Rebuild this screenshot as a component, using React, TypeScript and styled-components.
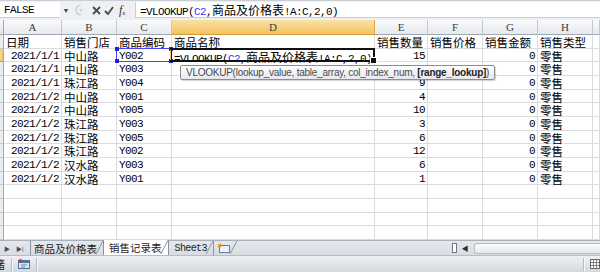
import React from 'react';
import styled, { createGlobalStyle } from 'styled-components';

const Global = createGlobalStyle`
  * { box-sizing: border-box; }
  html, body { margin: 0; padding: 0; background: #fff; }
  body {
    width: 600px;
    height: 272px;
    overflow: hidden;
    font-family: "Liberation Sans", "Noto Sans CJK SC", sans-serif;
  }
`;

const COLS = '4px 58px 55px 55px 203px 53px 55px 55px 55px 1fr';

const Page = styled.div`
  width: 600px;
  height: 272px;
  display: flex;
  flex-direction: column;
  background: #fff;
`;

/* ---------- formula bar ---------- */

const FormulaBar = styled.div`
  height: 20px;
  display: flex;
  align-items: stretch;
  padding: 1px 0 2px;
  background: #eef0f3;
  border-top: 1px solid #c9ced6;
  & > * { flex-shrink: 0; }
`;

const NameBox = styled.div`
  width: 60px;
  background: #fff;
  border-bottom: 1px solid #c9ced6;
  display: flex;
  align-items: center;
  padding-left: 4px;
`;

const DropArrow = styled.div`
  width: 12px;
  display: flex;
  align-items: center;
  justify-content: center;
  color: #444;
  font-size: 7px;
`;

const Grip = styled.div`
  width: 14px;
  display: flex;
  align-items: center;
  justify-content: center;
`;

const BarIcons = styled.div`
  width: 49px;
  display: flex;
  align-items: center;
  gap: 3px;
  padding-left: 5px;
`;

const BarIcon = styled.span`
  width: 10px;
  display: flex;
  align-items: center;
  justify-content: center;
`;

const Fx = styled.span`
  font: italic 12px "Liberation Serif", serif;
  color: #333;
  padding-left: 2px;
  sub { font-size: 7px; vertical-align: -1px; }
`;

const FormulaInput = styled.div`
  flex: 1;
  background: #fff;
  border-left: 1px solid #c9ced6;
  border-bottom: 1px solid #c9ced6;
  display: flex;
  align-items: center;
  padding-left: 4px;
  white-space: nowrap;
`;

/* ---------- text helpers ---------- */

const Mono = styled.span`
  font-family: "Liberation Mono", monospace;
  font-size: 11px;
  letter-spacing: -0.6px;
  color: #000;
`;

const Han = styled.span<{ $size?: number }>`
  font-family: "Noto Sans CJK SC", sans-serif;
  font-size: ${p => p.$size ?? 11.5}px;
  letter-spacing: 0;
`;

const RefText = styled.span`
  color: #3a3aff;
`;

function txt(s: string, size?: number) {
  return s
    .split(/([\u3000-\u9fff\uff00-\uffef]+)/)
    .filter(Boolean)
    .map((part, i) =>
      /[\u3000-\u9fff\uff00-\uffef]/.test(part) ? (
        <Han key={i} $size={size}>{part}</Han>
      ) : (
        <span key={i}>{part}</span>
      )
    );
}

/* ---------- sheet ---------- */

const Sheet = styled.div`
  position: relative;
  height: 220px;
  overflow: hidden;
  display: grid;
  grid-template-columns: ${COLS};
  grid-template-rows: 15px repeat(15, 13.67px);
`;

const Corner = styled.div`
  background: linear-gradient(#f7f8fa, #e3e6ea);
  border-right: 1px solid #9ea7b3;
  border-bottom: 1px solid #9ea7b3;
`;

const ColHead = styled.div<{ $sel?: boolean }>`
  background: ${p =>
    p.$sel ? 'linear-gradient(#fbe1a6, #f2c35f)' : 'linear-gradient(#f9fafb, #e6e9ed)'};
  border-right: 1px solid ${p => (p.$sel ? '#e0a84a' : '#c3c8cf')};
  border-bottom: 1px solid ${p => (p.$sel ? '#d89a36' : '#9ea7b3')};
  display: flex;
  align-items: center;
  justify-content: center;
  font: 11px "Liberation Serif", serif;
  color: #3c3c3c;
`;

const RowHead = styled.div<{ $sel?: boolean }>`
  background: ${p => (p.$sel ? 'linear-gradient(90deg, #f9d890, #f2c35f)' : '#e9ecf0')};
  border-right: 1px solid #9ea7b3;
  border-bottom: 1px solid ${p => (p.$sel ? '#d89a36' : '#c3c8cf')};
`;

const Cell = styled.div<{ $right?: boolean }>`
  position: relative;
  border-right: 1px solid #dadcdd;
  border-bottom: 1px solid #dadcdd;
  padding: 1px 2px 0 2px;
  text-align: ${p => (p.$right ? 'right' : 'left')};
  white-space: nowrap;
  line-height: 13px;
  font-family: "Liberation Mono", monospace;
  font-size: 11px;
  letter-spacing: -0.6px;
  color: #000;
`;

const EditFrame = styled.div`
  position: absolute;
  inset: -1px -1px -1px -2px;
  border: 2px solid #111;
  z-index: 2;
  pointer-events: none;
  &::before {
    content: '';
    position: absolute;
    left: -2px;
    top: 0;
    bottom: 0;
    width: 1px;
    background: #f2c35f;
  }
  &::after {
    content: '';
    position: absolute;
    right: -4px;
    bottom: -4px;
    width: 5px;
    height: 5px;
    background: #111;
    border: 1px solid #fff;
  }
`;

const RefFrame = styled.div`
  position: absolute;
  inset: -1px -1px -1px -1px;
  border: 1px solid #4343ff;
  z-index: 2;
`;

const RefDot = styled.span<{ $top?: boolean; $left?: boolean }>`
  position: absolute;
  width: 4px;
  height: 4px;
  background: #2020d8;
  ${p => (p.$top ? 'top: -2px;' : 'bottom: -2px;')}
  ${p => (p.$left ? 'left: -2px;' : 'right: -2px;')}
`;

const Tooltip = styled.div`
  position: absolute;
  left: 180px;
  top: 45px;
  width: 315px;
  height: 15px;
  z-index: 3;
  border: 1px solid #8d8d8d;
  border-radius: 2px;
  background: linear-gradient(#ffffff, #e6e8ee);
  box-shadow: 1px 1px 1px rgba(0, 0, 0, 0.18);
  display: flex;
  align-items: center;
  padding-left: 5px;
  white-space: nowrap;
  font: 10px "Liberation Sans", sans-serif;
  letter-spacing: -0.25px;
  color: #4a4a4a;
  b { color: #222; font-weight: bold; }
`;

/* ---------- sheet tabs ---------- */

const TabBar = styled.div`
  height: 15px;
  display: flex;
  align-items: stretch;
  background: linear-gradient(#e4e7eb, #d9dde3);
  border-top: 1px solid #a9b1bc;
`;

const TabNav = styled.div`
  width: 30px;
  display: flex;
  align-items: center;
  gap: 6px;
  padding-left: 4px;
  color: #3d4b5c;
  font-size: 6px;
`;

const Tab = styled.div<{ $active?: boolean; $mono?: boolean; $pl?: number }>`
  position: relative;
  display: flex;
  align-items: center;
  padding: 0 6px 0 ${p => p.$pl ?? 4}px;
  margin-top: ${p => (p.$active ? -1 : 0)}px;
  background: ${p => (p.$active ? '#fff' : 'transparent')};
  color: #222;
  font-family: ${p => (p.$mono ? '"Liberation Mono", monospace' : '"Noto Sans CJK SC", sans-serif')};
  font-size: ${p => (p.$mono ? 10 : 10.5)}px;
  letter-spacing: ${p => (p.$mono ? '-0.6px' : '0')};
  &::before {
    content: '';
    position: absolute;
    left: 0;
    top: 0;
    bottom: 0;
    width: 1px;
    background: #8792a0;
  }
  &::after {
    content: '';
    position: absolute;
    right: 3px;
    top: 0;
    bottom: 1px;
    width: 1px;
    background: #8792a0;
    transform: skewX(-28deg);
  }
`;

const Filler = styled.div`
  flex: 1;
`;

const Splitter = styled.div`
  width: 5px;
  margin: 2px 3px 2px 0;
  background: #fff;
  border: 1px solid #6f7a88;
`;

const ScrollArrow = styled.div`
  width: 10px;
  display: flex;
  align-items: center;
  justify-content: center;
  font-size: 7px;
  color: #333;
`;

const ScrollTrack = styled.div`
  width: 126px;
  margin: 2px 0 1px 4px;
  border: 1px solid #b3bac4;
  border-right: none;
  border-radius: 3px 0 0 3px;
  background: linear-gradient(#fbfcfd, #e3e7ec);
`;

/* ---------- status bar ---------- */

const StatusBar = styled.div`
  flex: 1;
  display: flex;
  align-items: center;
  background: linear-gradient(#eef0f3, #d3d8df);
  border-top: 1px solid #b6bdc7;
  overflow: hidden;
`;

const Ready = styled.span`
  margin-left: -17px;
  font: 11px "Noto Sans CJK SC", sans-serif;
  color: #222;
`;

const Sep = styled.span`
  width: 1px;
  height: 13px;
  background: #b4bbc5;
  box-shadow: 1px 0 0 #fafbfc;
  margin: 0 6px;
`;

const StatusIcon = styled.span`
  display: flex;
  align-items: center;
`;

/* ---------- data ---------- */

const HEAD = ['A', 'B', 'C', 'D', 'E', 'F', 'G', 'H', ''];
const RIGHT = [true, false, false, false, true, false, true, false, false];

const ROWS: string[][] = [
  ['日期', '销售门店', '商品编码', '商品名称', '销售数量', '销售价格', '销售金额', '销售类型', ''],
  ['2021/1/1', '中山路', 'Y002', '', '15', '', '0', '零售', ''],
  ['2021/1/1', '中山路', 'Y003', '', '', '', '0', '零售', ''],
  ['2021/1/1', '珠江路', 'Y004', '', '9', '', '0', '零售', ''],
  ['2021/1/2', '中山路', 'Y001', '', '4', '', '0', '零售', ''],
  ['2021/1/2', '中山路', 'Y005', '', '10', '', '0', '零售', ''],
  ['2021/1/2', '珠江路', 'Y003', '', '3', '', '0', '零售', ''],
  ['2021/1/2', '珠江路', 'Y005', '', '6', '', '0', '零售', ''],
  ['2021/1/2', '珠江路', 'Y002', '', '12', '', '0', '零售', ''],
  ['2021/1/2', '汉水路', 'Y003', '', '6', '', '0', '零售', ''],
  ['2021/1/2', '汉水路', 'Y001', '', '1', '', '0', '零售', ''],
  ['', '', '', '', '', '', '', '', ''],
  ['', '', '', '', '', '', '', '', ''],
  ['', '', '', '', '', '', '', '', ''],
  ['', '', '', '', '', '', '', '', ''],
];

function Formula() {
  return (
    <>
      =VLOOKUP(<RefText>C2</RefText>,<Han $size={12}>商品及价格表</Han>!A:C,2,0)
    </>
  );
}

export default function App() {
  return (
    <Page>
      <Global />
      <FormulaBar>
        <NameBox>
          <Mono>FALSE</Mono>
        </NameBox>
        <DropArrow>▼</DropArrow>
        <Grip>
          <svg width="8" height="12" viewBox="0 0 8 12">
            <path d="M6 1 A5 5 0 0 0 6 11" fill="none" stroke="#c4c9d0" strokeWidth="1.2" />
            <circle cx="6" cy="6" r="1.5" fill="#d2d6dc" />
          </svg>
        </Grip>
        <BarIcons>
          <BarIcon>
            <svg width="9" height="9" viewBox="0 0 9 9">
              <path d="M1 1 L8 8 M8 1 L1 8" stroke="#4a4a4a" strokeWidth="1.8" />
            </svg>
          </BarIcon>
          <BarIcon>
            <svg width="10" height="9" viewBox="0 0 10 9">
              <path d="M1 5 L4 8 L9 1" fill="none" stroke="#4a4a4a" strokeWidth="1.8" />
            </svg>
          </BarIcon>
          <Fx>
            f<sub>x</sub>
          </Fx>
        </BarIcons>
        <FormulaInput>
          <Mono>
            <Formula />
          </Mono>
        </FormulaInput>
      </FormulaBar>

      <Sheet>
        <Corner />
        {HEAD.map((h, i) => (
          <ColHead key={i} $sel={h === 'D'}>
            {h}
          </ColHead>
        ))}
        {ROWS.map((row, r) => (
          <React.Fragment key={r}>
            <RowHead $sel={r === 1} />
            {row.map((v, c) => {
              if (r === 1 && c === 3) {
                return (
                  <Cell key={c}>
                    <Formula />
                    <EditFrame />
                  </Cell>
                );
              }
              if (r === 1 && c === 2) {
                return (
                  <Cell key={c}>
                    {v}
                    <RefFrame>
                      <RefDot $top $left />
                      <RefDot $top />
                      <RefDot $left />
                      <RefDot />
                    </RefFrame>
                  </Cell>
                );
              }
              return (
                <Cell key={c} $right={r > 0 && RIGHT[c]}>
                  {txt(v)}
                </Cell>
              );
            })}
          </React.Fragment>
        ))}
        <Tooltip>
          VLOOKUP(lookup_value, table_array, col_index_num,&nbsp;<b>[range_lookup]</b>)
        </Tooltip>
      </Sheet>

      <TabBar>
        <TabNav>
          <span>▶</span>
          <span>▶|</span>
        </TabNav>
        <Tab>{txt('商品及价格表', 10.5)}</Tab>
        <Tab $active $pl={6}>{txt('销售记录表', 10.5)}</Tab>
        <Tab $mono $pl={7}>Sheet3</Tab>
        <Tab>
          <svg width="14" height="10" viewBox="0 0 14 10">
            <rect x="2.5" y="2.5" width="10" height="7" fill="#eef3fa" stroke="#5d7fa8" />
            <path d="M1 1 L4 4 M4 1 L1 4" stroke="#e0a020" strokeWidth="1.4" />
          </svg>
        </Tab>
        <Filler />
        <Splitter />
        <ScrollArrow>◀</ScrollArrow>
        <ScrollTrack />
      </TabBar>

      <StatusBar>
        <Ready>就绪</Ready>
        <Sep />
        <StatusIcon>
          <svg width="12" height="10" viewBox="0 0 12 10">
            <rect x="0.5" y="1.5" width="11" height="8" fill="#d9e6f5" stroke="#4f74a3" />
            <rect x="1" y="2" width="10" height="2" fill="#4f74a3" />
            <circle cx="2.5" cy="1.8" r="1.8" fill="#d63b2a" />
            <path d="M3 6 H9 M3 8 H7" stroke="#4f74a3" strokeWidth="0.8" />
          </svg>
        </StatusIcon>
        <Sep />
        <Filler />
        <Sep />
        <StatusIcon>
          <svg width="10" height="10" viewBox="0 0 10 10">
            <rect x="0.5" y="0.5" width="9" height="9" fill="#fff" stroke="#666" />
            <path d="M0.5 3.5 H9.5 M0.5 6.5 H9.5 M3.5 0.5 V9.5 M6.5 0.5 V9.5" stroke="#666" strokeWidth="0.8" />
          </svg>
        </StatusIcon>
      </StatusBar>
    </Page>
  );
}
